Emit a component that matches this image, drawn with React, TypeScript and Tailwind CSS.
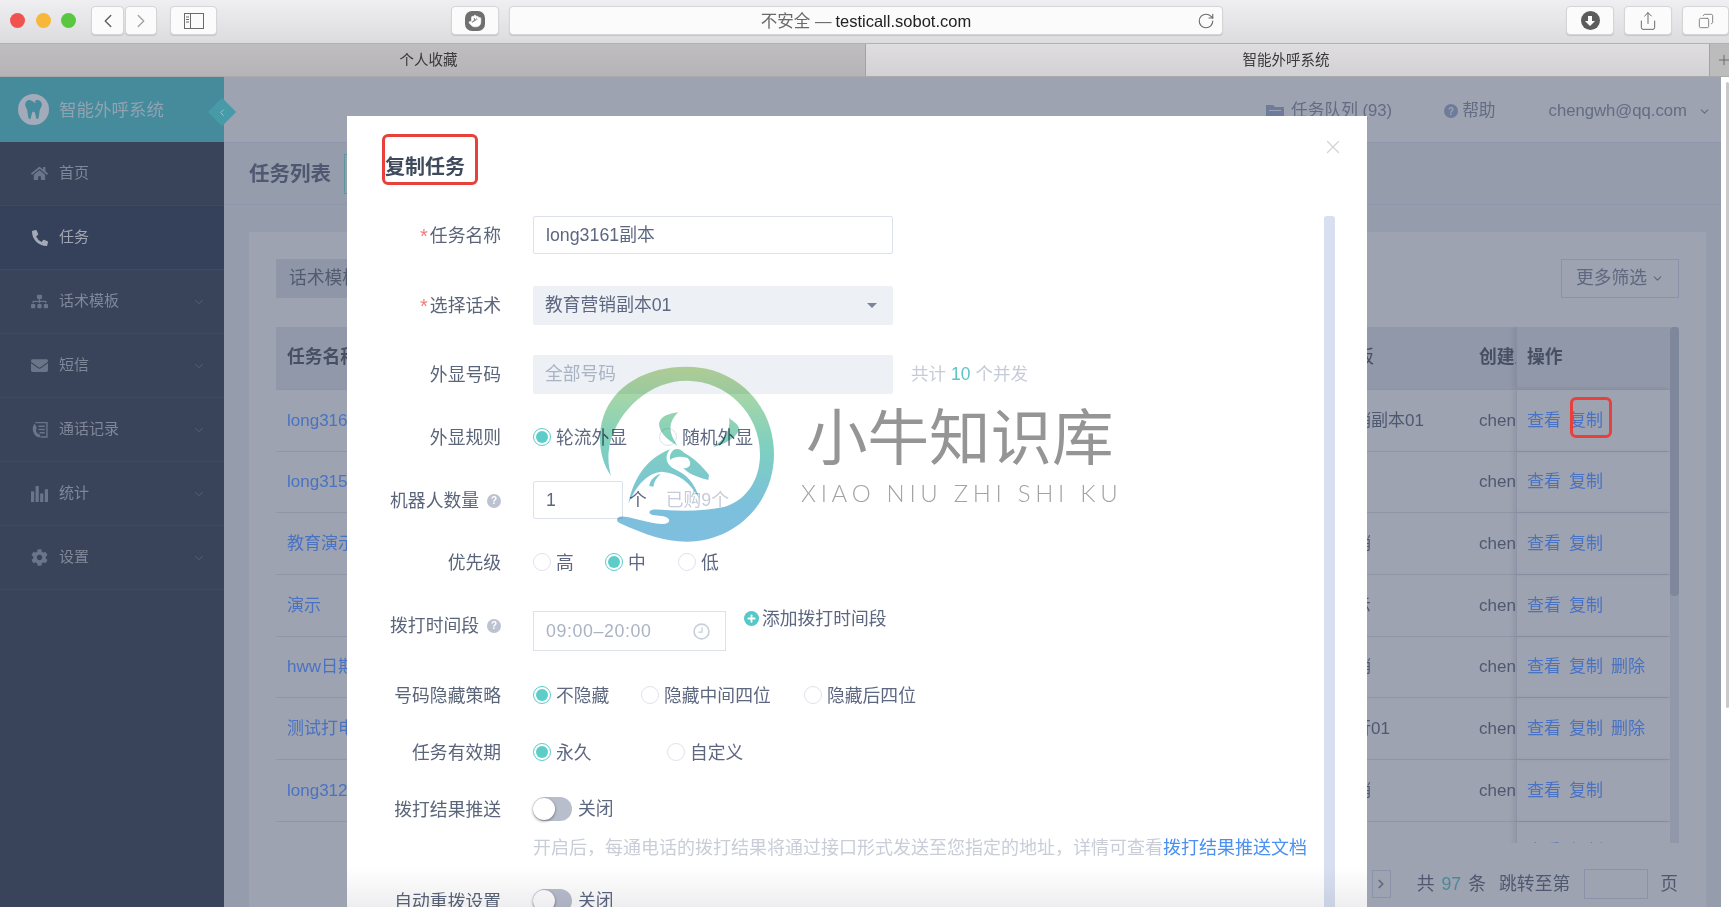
import {
  ChevronDown,
  ChevronLeft,
  ChevronRight,
  Copy,
  Hand,
  Plus,
  RotateCw,
  Share,
  X,
} from 'lucide-react';
import { FaCog, FaEnvelope, FaHome, FaPhoneAlt, FaSitemap, FaTooth } from 'react-icons/fa';

const NAV = [
  { label: '首页', icon: 'home' },
  { label: '任务', icon: 'phone', active: true },
  { label: '话术模板', icon: 'tree', arrow: true },
  { label: '短信', icon: 'mail', arrow: true },
  { label: '通话记录', icon: 'log', arrow: true },
  { label: '统计', icon: 'bars', arrow: true },
  { label: '设置', icon: 'cog', arrow: true },
];

const ROWS = [
  { name: 'long3161', tpl: '教育营销副本01' },
  { name: 'long3151', tpl: '' },
  { name: '教育演示', tpl: '教育营销' },
  { name: '演示', tpl: '教育演示' },
  { name: 'hww日期', tpl: '教育营销', del: true },
  { name: '测试打电话', tpl: '教育银行01', del: true },
  { name: 'long3121', tpl: '教育营销' },
  { name: 'long3111', tpl: '教育营销' },
];

function NavIcon({ name }: { name: string }) {
  const cls = 'h-[17px] w-[17px] text-[#6a7589]';
  if (name === 'home') return <FaHome className={cls} />;
  if (name === 'phone') return <FaPhoneAlt className="h-[16px] w-[16px] text-[#a3a9b6]" />;
  if (name === 'tree') return <FaSitemap className={cls} />;
  if (name === 'mail') return <FaEnvelope className={cls} />;
  if (name === 'cog') return <FaCog className={cls} />;
  if (name === 'bars') {
    return (
      <svg viewBox="0 0 16 16" className={cls} fill="currentColor">
        <rect x="0" y="6" width="3" height="10" />
        <rect x="4.3" y="1" width="3" height="15" />
        <rect x="8.6" y="8" width="3" height="8" />
        <rect x="13" y="4" width="3" height="12" />
      </svg>
    );
  }
  return (
    <svg viewBox="0 0 16 16" className={cls} fill="none" stroke="currentColor" strokeWidth="1.3">
      <path d="M4 1.5h11v13.5H9" />
      <path d="M7 5h6M7 8h6M8 11h5" />
      <path d="M3.5 2.5C1 5 .5 10 5 14.5l3 1c1-1 1-2 .5-2.5L6 11.5C4.5 9.500 4.500 7.500 5.500 6L3.500 2.500z" fill="currentColor" stroke="none" />
    </svg>
  );
}

function HelpDot() {
  return (
    <span className="ml-2 flex h-[14px] w-[14px] items-center justify-center rounded-full bg-[#bcc2d0] text-[10px] font-bold text-white">
      ?
    </span>
  );
}

function Radio({ label, on, width }: { label: string; on?: boolean; width: string }) {
  return (
    <div className={`flex items-center ${width}`}>
      <span
        className={`flex h-[18px] w-[18px] items-center justify-center rounded-full border ${
          on ? 'border-[#5ccdc9]' : 'border-[#dfe3ec]'
        }`}
      >
        {on && <span className="h-[12px] w-[12px] rounded-full bg-[#5ccdc9]" />}
      </span>
      <span className="ml-[5px] whitespace-nowrap pt-[2px]">{label}</span>
    </div>
  );
}

function Toggle() {
  return (
    <div className="flex items-center">
      <span className="flex h-[24px] w-[39px] items-center rounded-full bg-[#b9becd]">
        <span className="h-[22px] w-[22px] rounded-full bg-white shadow-[0_1px_3px_rgba(0,0,0,0.45)]" />
      </span>
      <span className="ml-[6px] pt-[1px]">关闭</span>
    </div>
  );
}

function Row({
  label,
  star,
  help,
  top,
  className,
  children,
}: {
  label: string;
  star?: boolean;
  help?: boolean;
  top: string;
  className?: string;
  children: React.ReactNode;
}) {
  return (
    <div className={`flex h-[40px] ${className ?? 'items-center'} ${top}`}>
      <div className="flex h-[28px] w-[154px] shrink-0 items-center justify-end pt-[2px] leading-[28px] text-[#5b6579]">
        {star && <span className="mr-[2px] text-[20px] text-[#f47c7c]">*</span>}
        {label}
        {help && <HelpDot />}
      </div>
      <div className="ml-[32px] flex min-w-0 flex-1 items-start">{children}</div>
    </div>
  );
}

function Logo() {
  return (
    <svg viewBox="0 0 600 570" className="absolute left-[590px] top-[360px] h-[190px] w-[200px] mix-blend-multiply">
      <defs>
        <linearGradient id="wm" gradientUnits="userSpaceOnUse" x1="0" y1="20" x2="0" y2="545">
          <stop offset="0" stopColor="#bcd99a" />
          <stop offset="0.45" stopColor="#7ed0bf" />
          <stop offset="0.8" stopColor="#7cc0dc" />
          <stop offset="1" stopColor="#7fbedf" />
        </linearGradient>
      </defs>
      <g fill="url(#wm)">
        <path d="M63 347C30 300 20 230 40 170C72 75 170 20 290 20C440 20 552 135 552 283C552 430 435 545 290 545C220 545 170 525 90 490C78 484 78 474 90 470C120 468 170 490 215 492C245 492 245 472 215 468C195 466 178 466 178 456C182 446 200 448 225 450C290 455 350 452 405 440C470 420 510 360 510 283C510 160 410 62 290 62C180 62 85 150 60 250C52 285 55 320 63 347Z" />
        <path d="M265 157C235 160 212 170 207 190C207 215 225 235 262 257C245 230 225 195 265 157Z" />
        <path d="M417 172C420 180 445 190 447 205C447 225 415 250 368 262C395 245 425 215 417 172Z" />
        <path d="M115 432C130 355 170 295 240 268C222 290 228 315 255 328C290 345 312 365 328 415C300 370 270 340 215 335C170 340 140 375 115 432Z" />
        <path d="M255 268C275 262 285 285 305 300C280 285 250 290 240 300C238 285 245 272 255 268Z" />
        <path d="M248 270C290 270 335 315 357 345L355 360C325 352 300 345 280 325C300 325 310 310 290 290C275 278 260 278 248 270Z" />
        <path d="M178 378C180 360 195 345 212 342C200 352 192 365 190 380Z" />
      </g>
    </svg>
  );
}

function Toolbar() {
  const btn = 'flex h-[29px] items-center justify-center rounded-[4px] border border-[#d5d4d6] bg-[#fbfbfb] shadow-[0_1px_1px_rgba(0,0,0,0.12)]';
  return (
    <div className="flex h-[44px] shrink-0 border-b border-[#b2b1b2] bg-gradient-to-b from-[#efeef0] to-[#dcdbdd] pt-[6px]">
      <div className="ml-[10px] flex h-[29px] items-center gap-[10.500px]">
        <span className="h-[15px] w-[15px] rounded-full bg-[#f0524f]" />
        <span className="h-[15px] w-[15px] rounded-full bg-[#f7b73b]" />
        <span className="h-[15px] w-[15px] rounded-full bg-[#5ac83f]" />
      </div>
      <div className={`${btn} ml-[15px] w-[33px]`}>
        <ChevronLeft className="h-[22px] w-[22px] text-[#5e5e5e]" strokeWidth={1.5} />
      </div>
      <div className={`${btn} ml-[1px] w-[32px]`}>
        <ChevronRight className="h-[22px] w-[22px] text-[#a3a3a3]" strokeWidth={1.5} />
      </div>
      <div className={`${btn} ml-[13px] w-[47px]`}>
        <svg viewBox="0 0 20 16" className="h-[16px] w-[20px] text-[#6a6a6a]" fill="none" stroke="currentColor">
          <rect x="0.500" y="0.500" width="19" height="15" />
          <path d="M6.500 0.500v15" />
          <path d="M2 4h3M2 6.500h3M2 9h3" />
        </svg>
      </div>
      <div className={`${btn} ml-[234px] w-[48px]`}>
        <span className="flex h-[20px] w-[20px] items-center justify-center rounded-[7px] bg-[#6f6f6f]">
          <Hand className="h-[14px] w-[14px] fill-white text-white" strokeWidth={1} />
        </span>
      </div>
      <div className={`${btn} relative ml-[10px] w-[714px] pt-[1px] text-[16.500px]`}>
        <span className="text-[#6a6a6a]">不安全 — </span>
        <span className="ml-[4px] text-[#222]">testicall.sobot.com</span>
        <RotateCw className="absolute right-[7px] top-[5px] h-[18px] w-[18px] text-[#6a6a6a]" strokeWidth={1.5} />
      </div>
      <div className={`${btn} ml-[343px] w-[48px]`}>
        <span className="flex h-[19px] w-[19px] items-center justify-center rounded-full bg-[#5c5c5c]">
          <svg viewBox="0 0 12 12" className="h-[12px] w-[12px]" fill="white">
            <path d="M4 1h4v5h3L6 11 1 6h3z" />
          </svg>
        </span>
      </div>
      <div className={`${btn} ml-[10px] w-[48px]`}>
        <Share className="h-[20px] w-[20px] text-[#6a6a6a]" strokeWidth={1.2} />
      </div>
      <div className={`${btn} ml-[10px] w-[47px]`}>
        <Copy className="h-[16px] w-[16px] -scale-x-100 text-[#6a6a6a]" strokeWidth={1.2} />
      </div>
    </div>
  );
}

function Table() {
  return (
    <div className="mt-[29px] flex h-[516px] overflow-hidden">
      <div className="min-w-0 flex-1">
        <div className="flex h-[63px] items-center border-b border-[#8d94a6] bg-[#9198a9] pb-[2px] font-bold text-[#474f63]">
          <div className="w-[1027px] shrink-0 pl-[11px]">任务名称</div>
          <div className="w-[176px] shrink-0 font-normal">话术模板</div>
          <div className="w-[37px] shrink-0 overflow-hidden whitespace-nowrap">创建人</div>
          <div className="flex h-full flex-1 items-center border-l border-[#878ea1] pl-[10px] shadow-[-3px_0_4px_rgba(70,78,100,0.12)]">操作</div>
        </div>
        {ROWS.map((r) => (
          <div key={r.name} className="flex h-[61.700px] items-center border-b border-[#8f96a8] text-[17px] text-[#4e5870]">
            <div className="w-[1027px] shrink-0 pl-[11px] text-[#4a72c2]">{r.name}</div>
            <div className="w-[176px] shrink-0 whitespace-nowrap">{r.tpl}</div>
            <div className="w-[37px] shrink-0 overflow-hidden whitespace-nowrap">chengwh</div>
            <div className="flex h-full flex-1 items-center gap-[8px] border-l border-[#8d94a6] pl-[10px] text-[#4a72c2] shadow-[-3px_0_4px_rgba(70,78,100,0.12)]">
              <span>查看</span>
              <span>复制</span>
              {r.del && <span>删除</span>}
            </div>
          </div>
        ))}
      </div>
      <div className="w-[9px] shrink-0 bg-[#9198a9]">
        <div className="h-[269px] rounded-[4px] bg-[#7f879c]" />
      </div>
    </div>
  );
}

export default function App() {
  return (
    <div className="relative flex h-[907px] w-[1729px] flex-col overflow-hidden bg-[#959cab] blur-[0.4px] [font-family:'Liberation_Sans','Noto_Sans_CJK_SC',sans-serif]">
      <Toolbar />

      <div className="flex h-[32px] shrink-0 text-[14.500px] text-[#3a3a3a]">
        <div className="flex w-[866px] shrink-0 items-center justify-center border-r border-[#a3a2a3] bg-gradient-to-b from-[#bfbdbf] to-[#b6b4b6] pr-[8px] pt-[2px]">个人收藏</div>
        <div className="flex w-[843px] shrink-0 items-center justify-center bg-gradient-to-b from-[#dfdde0] to-[#d2d1d3] pr-[3px] pt-[2px]">智能外呼系统</div>
        <div className="flex flex-1 items-center overflow-hidden border-l border-[#a3a2a3] bg-[#bdbcbd] pl-[6px]">
          <Plus className="h-[16px] w-[16px] shrink-0 text-[#5c5c5c]" strokeWidth={1.2} />
        </div>
      </div>

      <div className="flex min-h-0 flex-1 border-t border-[#aaa9ab] text-[17.800px]">
        {/* sidebar */}
        <aside className="relative w-[224px] shrink-0 bg-[#39435a] text-[15px] text-[#7f8798]">
          <div className="flex h-[65px] items-center bg-[#458b9c] pl-[18px]">
            <span className="flex h-[31px] w-[31px] items-center justify-center rounded-full bg-[#a3abbb]">
              <FaTooth className="h-[19px] w-[19px] text-[#458b9c]" />
            </span>
            <span className="ml-[10px] pt-[1px] text-[17.500px] text-[#8fa3b2]">智能外呼系统</span>
          </div>
          <span className="absolute left-[212px] top-[25px] flex h-[20px] w-[20px] rotate-45 items-center justify-center bg-[#479ba8]">
            <ChevronLeft className="h-[11px] w-[11px] -rotate-45 text-[#9fc6cc]" />
          </span>
          {NAV.map((item) => (
            <div
              key={item.label}
              className={`flex h-[64px] items-center border-b border-[#3f4960] pl-[31px] pr-[18px] ${
                item.active ? 'bg-[#35415a] text-[#a0a6b2]' : ''
              }`}
            >
              <span className="flex w-[17px] justify-center">
                <NavIcon name={item.icon} />
              </span>
              <span className="ml-[11px] flex-1">{item.label}</span>
              {item.arrow && <ChevronDown className="h-[14px] w-[14px] text-[#606b82]" strokeWidth={1.2} />}
            </div>
          ))}
        </aside>

        {/* page behind the dialog */}
        <main className="flex min-w-0 flex-1 flex-col">
          <div className="flex h-[65px] shrink-0 items-center justify-end bg-[#9da3b0] pr-[10px] pt-[3px] text-[16.700px] text-[#636c82]">
            <svg viewBox="0 0 18 15" className="h-[15px] w-[18px] text-[#6f7b9a]" fill="currentColor">
              <path d="M0 1h7l2 2h9v12H0z" />
              <path d="M3 6h12v1H3z" fill="#9da3b0" />
            </svg>
            <span className="ml-[7px]">任务队列 (93)</span>
            <span className="ml-[52px] flex h-[14px] w-[14px] items-center justify-center rounded-full bg-[#6f7b9a] text-[10px] font-bold text-[#9da3b0]">?</span>
            <span className="ml-[4px]">帮助</span>
            <span className="ml-[53px]">chengwh@qq.com</span>
            <ChevronDown className="ml-[11px] h-[13px] w-[13px]" />
          </div>
          <div className="flex h-[63px] shrink-0 items-center border-y border-[#8e97ab] pl-[25px]">
            <span className="pt-[2px] text-[20.500px] font-bold text-[#4f5870]">任务列表</span>
            <span className="ml-[13px] h-[40px] w-[80px] border border-[#5d96a0]" />
          </div>
          <div className="ml-[25px] mr-[15px] mt-[27px] flex-1 bg-[#9da3b0] px-[27px] pt-[27px]">
            <div className="flex h-[39px] items-center justify-between">
              <span className="flex h-full items-center bg-[#8f96a8] px-[13px] text-[#525b70]">话术模板</span>
              <span className="flex h-full w-[118px] items-center justify-center gap-[4px] border border-[#8b93ab] text-[#5f6880]">
                更多筛选
                <ChevronDown className="h-[13px] w-[13px]" />
              </span>
            </div>
            <Table />
            <div className="flex h-[82px] items-center justify-end text-[#4f586e]">
              <span className="flex h-[28px] w-[19px] items-center justify-center border border-[#8b93ab]">
                <ChevronRight className="h-[14px] w-[14px] text-[#5f6880]" strokeWidth={3} />
              </span>
              <span className="ml-[26px] tracking-[1px]">共</span>
              <span className="ml-[6px] text-[#4b8a96]">97</span>
              <span className="ml-[7px]">条</span>
              <span className="ml-[13px]">跳转至第</span>
              <span className="ml-[14px] h-[30px] w-[64px] border border-[#8b93ab]" />
              <span className="ml-[12px] mr-[1px]">页</span>
            </div>
          </div>
        </main>

        {/* window scrollbar */}
        <div className="w-[8px] shrink-0 bg-white pl-[5px] pt-[5px]">
          <div className="h-[626px] rounded-full bg-[#c9c9c9]" />
        </div>
      </div>

      {/* dialog */}
      <div className="absolute left-[347px] top-[116px] flex h-[791px] w-[1020px] flex-col bg-white text-[17.800px] text-[#5d6780]">
        <div className="flex h-[99px] shrink-0 items-start justify-between">
          <div className="ml-[35px] mt-[18px] flex h-[51px] w-[96px] items-end rounded-[6px] border-[3px] border-[#e8403a] pb-[3px]">
            <span className="text-[20px] font-bold leading-[24px] text-[#3f4a5c]">复制任务</span>
          </div>
          <X className="mr-[23px] mt-[20px] h-[22px] w-[22px] text-[#d2d2d2]" strokeWidth={1.3} />
        </div>

        <div className="flex min-h-0 flex-1">
          <div className="min-w-0 flex-1">
            <Row label="任务名称" star top="mt-0">
              <div className="flex h-[38px] w-[360px] items-center rounded-[2px] border border-[#dde1ea] px-[12px] pt-[1px]">long3161副本</div>
            </Row>
            <Row label="选择话术" star top="mt-[30px]">
              <div className="flex h-[39px] w-[360px] items-center justify-between rounded-[2px] bg-[#edf0f5] px-[12px] pr-[16px]">
                教育营销副本01
                <span className="h-0 w-0 border-x-[5px] border-t-[5px] border-x-transparent border-t-[#7a8398]" />
              </div>
            </Row>
            <Row label="外显号码" top="mt-[29px]">
              <div className="flex h-[39px] w-[360px] items-center rounded-[2px] bg-[#edf0f5] px-[12px] pt-[1px] text-[#a9b3c4]">全部号码</div>
              <div className="ml-[18px] flex h-[39px] items-center pt-[1px] text-[17.500px] text-[#c5cbd8]">
                共计<span className="mx-[5px] text-[#5cc4c4]">10</span>个并发
              </div>
            </Row>
            <Row label="外显规则" top="mt-[23px]">
              <div className="flex h-[40px] items-center">
                <Radio label="轮流外显" on width="w-[126px]" />
                <Radio label="随机外显" width="w-[100px]" />
              </div>
            </Row>
            <Row label="机器人数量" help top="mt-[23px]">
              <div className="flex h-[38px] w-[90px] items-center rounded-[2px] border border-[#dde1ea] px-[12px] pt-[1px]">1</div>
              <span className="ml-[6px] flex h-[38px] items-center">个</span>
              <span className="ml-[19px] flex h-[38px] items-center pt-[1px] text-[#c5cbd8]">已购9个</span>
            </Row>
            <Row label="优先级" top="mt-[22px]">
              <div className="flex h-[40px] items-center">
                <Radio label="高" width="w-[72px]" />
                <Radio label="中" on width="w-[73px]" />
                <Radio label="低" width="w-[60px]" />
              </div>
            </Row>
            <Row label="拨打时间段" help top="mt-[29px]" className="items-start">
              <div className="flex h-[40px] w-[193px] items-center justify-between border border-[#dde1ea] px-[12px] pr-[15px] pt-[1px] tracking-[0.6px] text-[#a9b3c4]">
                09:00–20:00
                <svg viewBox="0 0 16 16" className="h-[17px] w-[17px] text-[#c9cfda]" fill="none" stroke="currentColor" strokeWidth="1.600">
                  <circle cx="8" cy="8" r="7" />
                  <path d="M8.500 4v4.500H5" strokeWidth="1.200" />
                </svg>
              </div>
              <div className="ml-[18px] flex items-center leading-[14px]">
                <span className="flex h-[15px] w-[15px] items-center justify-center rounded-full bg-[#57c7c7] text-white">
                  <Plus className="h-[11px] w-[11px]" strokeWidth={4} />
                </span>
                <span className="ml-[3px]">添加拨打时间段</span>
              </div>
            </Row>
            <Row label="号码隐藏策略" top="mt-[24px]">
              <div className="flex h-[40px] items-center">
                <Radio label="不隐藏" on width="w-[108px]" />
                <Radio label="隐藏中间四位" width="w-[163px]" />
                <Radio label="隐藏后四位" width="w-[130px]" />
              </div>
            </Row>
            <Row label="任务有效期" top="mt-[17px]">
              <div className="flex h-[40px] items-center">
                <Radio label="永久" on width="w-[134px]" />
                <Radio label="自定义" width="w-[100px]" />
              </div>
            </Row>
            <Row label="拨打结果推送" top="mt-[17px]">
              <div className="flex h-[40px] items-center">
                <Toggle />
              </div>
            </Row>
            <div className="ml-[186px] flex h-[36px] items-center whitespace-nowrap pt-[3px] text-[18px] text-[#c8cdd8]">
              开启后，每通电话的拨打结果将通过接口形式发送至您指定的地址，详情可查看
              <span className="text-[#4a90f0]">拨打结果推送文档</span>
            </div>
            <Row label="自动重拨设置" top="mt-[16px]">
              <div className="flex h-[40px] items-center">
                <Toggle />
              </div>
            </Row>
          </div>
          <div className="mr-[32px] mt-[1px] w-[11px] shrink-0 rounded-t-[3px] bg-[#d7dff0]" />
        </div>

        {/* fade at the dialog's foot */}
        <div className="absolute inset-x-0 bottom-0 h-[40px] bg-gradient-to-b from-white to-[#eeeef0] mix-blend-multiply" />
      </div>

      {/* red marks drawn on the screenshot */}
      <div className="absolute left-[1570px] top-[397px] h-[41px] w-[42px] rounded-[6px] border-[3px] border-[#e8403a]" />

      {/* watermark */}
      <Logo />
      <div className="absolute left-[806px] top-[394px] text-[61.500px] leading-[90px] text-[#959595]">小牛知识库</div>
      <div className="absolute left-[801px] top-[479px] whitespace-nowrap text-[24px] font-light leading-[28px] tracking-[4.700px] text-[#a3a3a3] [font-family:Lato,sans-serif]">
        XIAO NIU ZHI SHI KU
      </div>
    </div>
  );
}
